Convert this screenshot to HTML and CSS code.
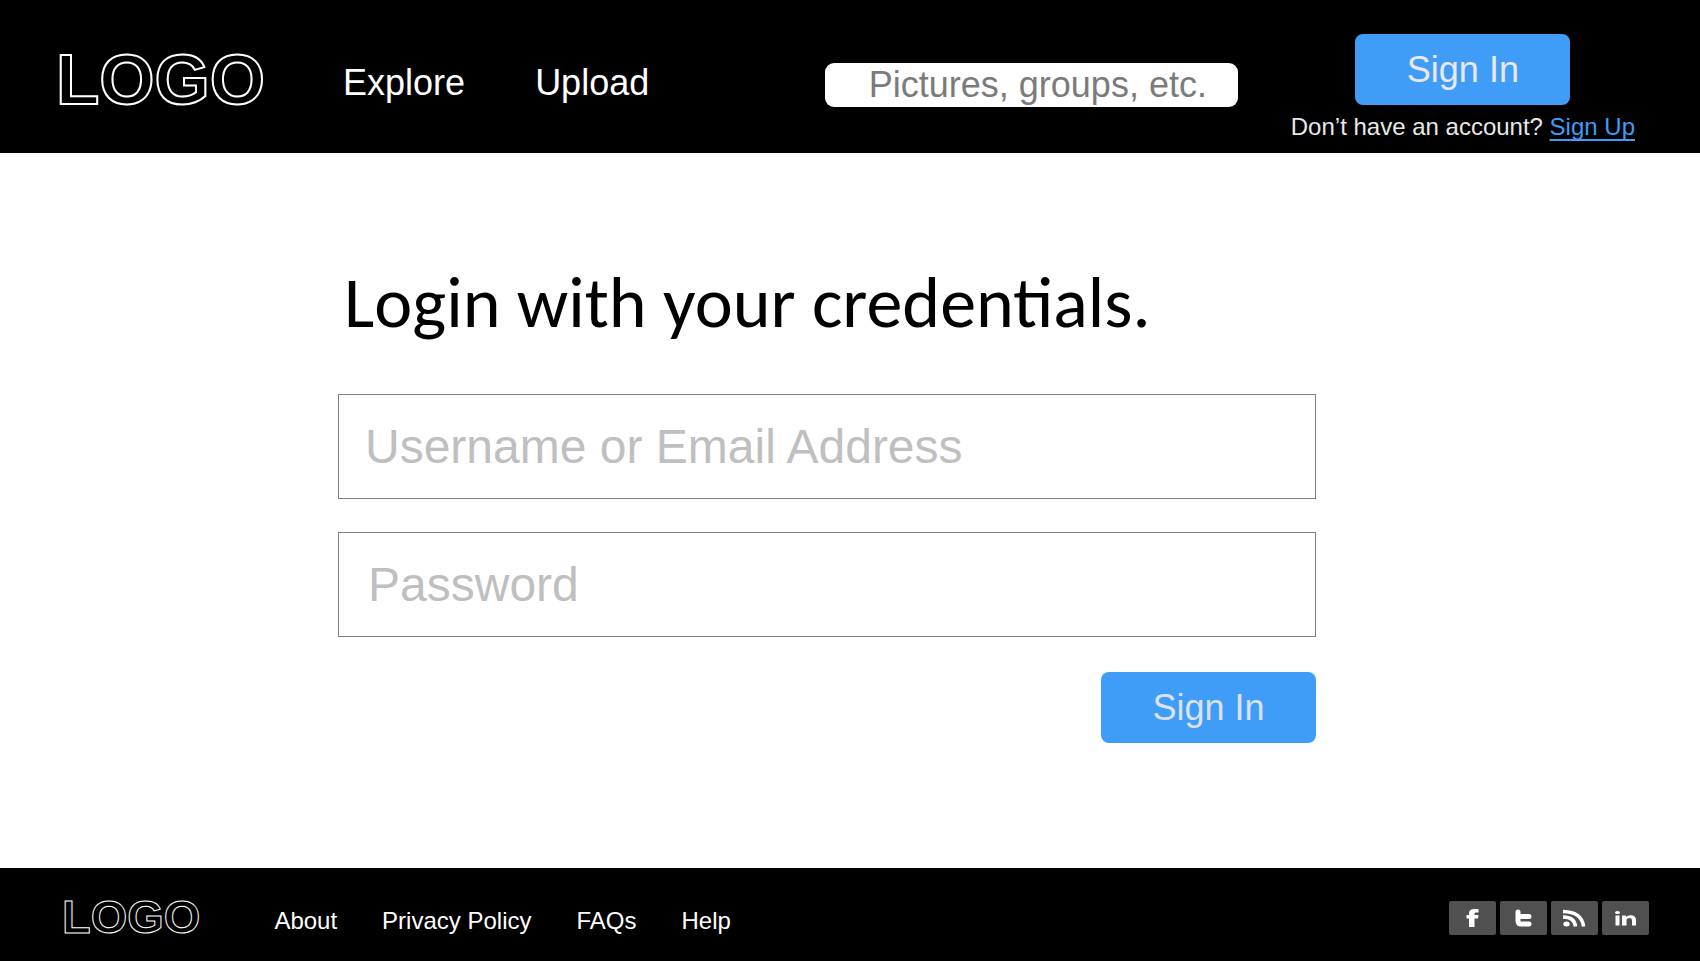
FILE: index.html
```html
<!DOCTYPE html>
<html lang="en">
<head>
<meta charset="utf-8">
<title>Login</title>
<link rel="stylesheet" href="styles.css">
</head>
<body>
<header class="site-header">
  <a class="logo" href="#">LOGO</a>
  <nav class="main-nav" aria-label="Main">
    <a href="#">Explore</a>
    <a href="#">Upload</a>
  </nav>
  <form class="search">
    <input class="search-input" type="text" aria-label="Search" placeholder="Pictures, groups, etc.">
  </form>
  <div class="account">
    <button class="button" type="button">Sign In</button>
    <p class="account-note">Don’t have an account? <a href="#">Sign Up</a></p>
  </div>
</header>
<main class="content">
  <form class="login">
    <h1 class="login-title">Login with your credentials.</h1>
    <input class="field" type="text" aria-label="Username or Email Address" placeholder="Username or Email Address">
    <input class="field" type="password" aria-label="Password" placeholder="Password">
    <button class="button button-submit" type="button">Sign In</button>
  </form>
</main>
<footer class="site-footer">
  <a class="logo logo-small" href="#">LOGO</a>
  <nav class="footer-nav" aria-label="Footer">
    <a href="#">About</a>
    <a href="#">Privacy Policy</a>
    <a href="#">FAQs</a>
    <a href="#">Help</a>
  </nav>
  <div class="social">
    <a href="#" aria-label="Facebook"><svg viewBox="0 0 47 34"><path d="M20 26V17.500H17.500V14H20V12.500Q20 8 25 8H29.500V11.500H27Q25.500 11.500 25.500 13V14H29.500L29 17.500H25.500V26Z"/></svg></a>
    <a href="#" aria-label="Twitter"><svg viewBox="0 0 47 34"><path d="M18 11V20Q18 23 21.500 23H29M18 15.500H29" fill="none" stroke="#fff" stroke-width="5" stroke-linecap="round"/></svg></a>
    <a href="#" aria-label="RSS"><svg viewBox="0 0 47 34"><ellipse cx="15.500" cy="23" rx="3.200" ry="2.500"/><path d="M12 16Q23.500 16 24.500 25.500M12 10.500Q31 11 32.500 25.500" fill="none" stroke="#fff" stroke-width="3.500"/></svg></a>
    <a href="#" aria-label="LinkedIn"><svg viewBox="0 0 47 34"><ellipse cx="15.500" cy="11.500" rx="2.500" ry="1.500"/><path d="M13.500 14.500H17.500V24.500H13.500ZM20 14.500H24V16Q25.500 14.200 28.500 14.200Q34 14.200 34 19V24.500H30V19.500Q30 17 27.500 17Q24.500 17 24.500 19.500V24.500H20Z"/></svg></a>
  </div>
</footer>
</body>
</html>
```

FILE: styles.css
```css
* {
  box-sizing: border-box;
}

body {
  margin: 0;
  min-height: 100vh;
  display: flex;
  flex-direction: column;
  background: #fff;
  color: #000;
  font-family: "Liberation Sans", Arial, sans-serif;
}

a {
  color: inherit;
  text-decoration: none;
}

input,
button {
  font-family: inherit;
}

.site-header {
  display: flex;
  align-items: flex-start;
  padding: 34px 65px 12px 56px;
  background: #000;
  color: #fff;
}

.logo {
  font-size: 71px;
  font-weight: 700;
  line-height: 80px;
  margin-top: 6px;
  color: #000;
  -webkit-text-stroke: 2px #fff;
}

.main-nav {
  display: flex;
  gap: 70px;
  margin-top: 29px;
  margin-left: 78px;
  font-size: 36px;
  line-height: 40px;
}

.search {
  margin-top: 29px;
  margin-left: auto;
}

.search-input {
  display: block;
  width: 413px;
  height: 44px;
  padding: 0 20px 0 44px;
  border: 0;
  border-radius: 9px;
  background: #fff;
  font-size: 36px;
}

.search-input::placeholder {
  color: #7b7b7b;
}

.account {
  display: flex;
  flex-direction: column;
  align-items: center;
  margin-left: 53px;
}

.button {
  width: 215px;
  height: 71px;
  padding: 0;
  border: 0;
  border-radius: 8px;
  background: #3f9cf7;
  color: #e8e8e8;
  font-size: 36px;
}

.account-note {
  margin: 8px 0 0;
  color: #e8e8e8;
  font-size: 24px;
  line-height: 28px;
}

.account-note a {
  color: #3f9cf7;
  text-decoration: underline;
  text-decoration-thickness: 2px;
  text-decoration-skip-ink: none;
  text-underline-offset: 4px;
}

.content {
  flex: 1;
  padding: 107px 384px 120px 338px;
}

.login {
  display: flex;
  flex-direction: column;
}

.login-title {
  margin: 0 0 50px 6px;
  font-family: Calibri, Carlito, "Open Sans", sans-serif;
  font-size: 72px;
  font-weight: 400;
  line-height: 84px;
  white-space: nowrap;
}

.field {
  height: 105px;
  margin-bottom: 33px;
  padding: 0 26px;
  border: 1px solid #808080;
  background: #fff;
  font-size: 48px;
}

.field[type="password"] {
  padding-left: 29px;
}

.field::placeholder {
  color: #bfbfbf;
}

.button-submit {
  align-self: flex-end;
  margin-top: 2px;
  color: #dbe1f2;
}

.site-footer {
  display: flex;
  align-items: center;
  height: 93px;
  padding: 0 51px 0 62px;
  background: #000;
  color: #fff;
}

.logo-small {
  margin-top: 5px;
  font-size: 47px;
  line-height: 56px;
  -webkit-text-stroke-width: 1px;
}

.footer-nav {
  display: flex;
  gap: 45px;
  margin-top: 12px;
  margin-left: 74px;
  font-size: 24px;
  line-height: 28px;
}

.social {
  display: flex;
  gap: 4px;
  margin-top: 7px;
  margin-left: auto;
}

.social a {
  width: 47px;
  height: 34px;
  border-radius: 2px;
  background: #505050;
}

.social svg {
  display: block;
  width: 47px;
  height: 34px;
  fill: #fff;
}
```
